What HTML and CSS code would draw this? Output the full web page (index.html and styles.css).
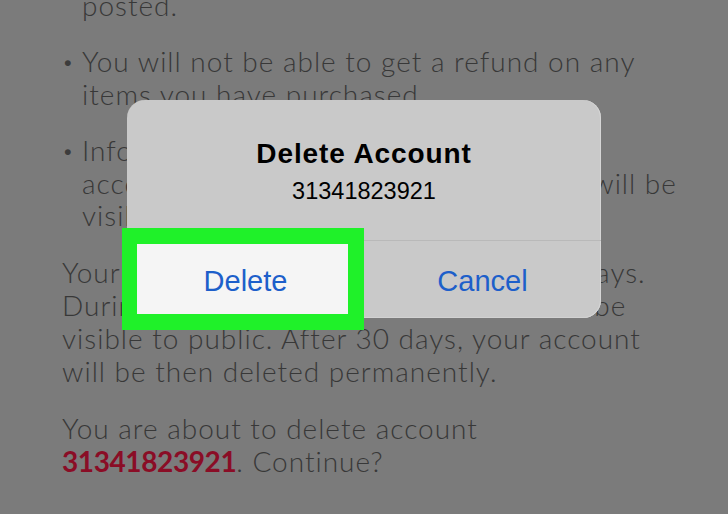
FILE: index.html
```html
<!DOCTYPE html>
<html lang="en">
<head>
<meta charset="utf-8">
<title>Delete Account</title>
<link rel="stylesheet" href="styles.css">
</head>
<body>
<main class="page">
  <ul class="bullets">
    <li><span class="dot">•</span><span class="txt">Your photos, reviews and tips will no longer be<br>posted.</span></li>
    <li><span class="dot">•</span><span class="txt">You will not be able to get a refund on any<br>items you have purchased.</span></li>
    <li><span class="dot">•</span><span class="txt">Information you have posted under this<br>account such as comments and photos will be<br>visible to public.</span></li>
  </ul>
  <p class="para">Your account will be deactivated for 30 days.<br>During this period, your account will not be<br>visible to public. After 30 days, your account<br>will be then deleted permanently.</p>
  <p class="para">You are about to delete account<br><strong class="acct">31341823921</strong>. Continue?</p>

  <div class="alert" role="alertdialog" aria-labelledby="alert-title">
    <div class="alert-body">
      <h2 class="alert-title" id="alert-title">Delete Account</h2>
      <div class="alert-msg">31341823921</div>
    </div>
    <div class="alert-actions">
      <div class="alert-btn is-highlighted"><span class="btn-label">Delete</span></div>
      <div class="alert-btn"><span class="btn-label">Cancel</span></div>
    </div>
  </div>
</main>
</body>
</html>
```

FILE: styles.css
```css
html, body {
  margin: 0;
  padding: 0;
  height: 100%;
  overflow: hidden;
  background: #7b7b7b;
}

.page {
  position: relative;
  height: 514px;
  box-sizing: border-box;
  padding-left: 62px;
  display: flex;
  flex-direction: column;
  font-family: Lato, "Open Sans", sans-serif;
  font-weight: 300;
  font-size: 28px;
  letter-spacing: 1px;
  color: #383838;
  white-space: nowrap;
}

.bullets {
  list-style: none;
  margin: -44px 0 0 0;
  padding: 0;
  display: flex;
  flex-direction: column;
  gap: 24px;
  line-height: 32.5px;
}

.bullets li {
  display: flex;
}

.dot {
  width: 20px;
  flex: none;
  font-size: 20px;
  letter-spacing: 0;
  color: #3c3c3c;
}

.para {
  margin: 24px 0 0 0;
  line-height: 33px;
}

.acct {
  font-weight: 700;
  letter-spacing: -0.4px;
  color: #8a0d26;
}

/* iOS-style alert over the content */
.alert {
  position: absolute;
  left: 127px;
  top: 100px;
  width: 474px;
  height: 218px;
  border-radius: 18px;
  background: #c9c9c9;
  box-shadow: inset -1px 0 0 #d6d6d6, inset 0 -1px 0 #d2d2d2;
  display: flex;
  flex-direction: column;
  font-family: "Liberation Sans", Arial, sans-serif;
  font-weight: 400;
  letter-spacing: 0;
  color: #000;
}

.alert-body {
  height: 140px;
  box-sizing: border-box;
  padding-top: 38px;
  text-align: center;
}

.alert-title {
  margin: 0;
  font-size: 28px;
  font-weight: 700;
  line-height: 32px;
  letter-spacing: 0.9px;
}

.alert-msg {
  margin-top: 7px;
  font-size: 23.5px;
  line-height: 28px;
}

.alert-actions {
  flex: 1;
  display: flex;
  border-top: 1px solid #b9b9b9;
}

.alert-btn {
  position: relative;
  flex: 1;
  display: flex;
  align-items: center;
  justify-content: center;
  padding-top: 3px;
  font-size: 29px;
  color: #1d5fca;
}

.btn-label {
  position: relative;
  z-index: 1;
}

.alert-btn.is-highlighted::before {
  content: "";
  position: absolute;
  left: -5px;
  right: 0;
  top: -13px;
  bottom: -12px;
  border-style: solid;
  border-color: #1ff129;
  border-width: 16px 16px 16px 15px;
  background: #f5f5f5;
}
```
